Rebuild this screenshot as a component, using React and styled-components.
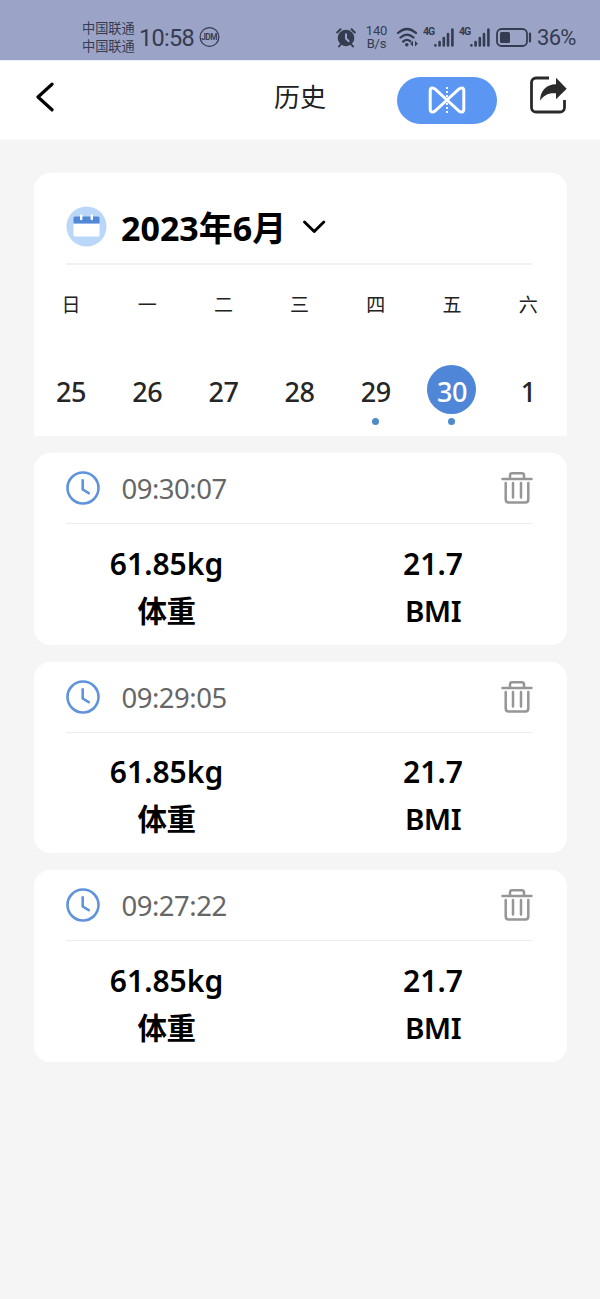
import React from "react";
import styled, { createGlobalStyle } from "styled-components";

const GlobalStyle = createGlobalStyle`
  * { box-sizing: border-box; }
  body {
    margin: 0;
    background: #f5f5f5;
    color: #000;
    font-family: "Noto Sans", "Noto Sans CJK SC", sans-serif;
  }
  svg { display: block; flex: none; }
`;

const Screen = styled.div`
  width: 600px;
  height: 1299px;
  overflow: hidden;
  background: #f5f5f5;
`;

const StatusBar = styled.header`
  display: flex;
  align-items: center;
  height: 60px;
  padding: 15px 24px 0 82px;
  background: #9ba4c6;
  color: #353b50;
  white-space: nowrap;
`;

const Carriers = styled.div`
  width: 53px;
  margin-top: -2px;
  font-size: 13.2px;
  line-height: 18px;
`;

const Clock = styled.div`
  width: 55px;
  margin: 0 5px 0 4px;
  font: 23.5px/30px Roboto, sans-serif;
  letter-spacing: -0.7px;
`;

const NetSpeed = styled.div`
  width: 23px;
  margin: -1px 8px 0 9px;
  font: 13px/13px Roboto, sans-serif;
  letter-spacing: -0.2px;
  text-align: center;
`;

const Spacer = styled.div`
  flex: 1;
`;

const Signals = styled.div`
  display: flex;
  gap: 5px;
  margin: 0 6px 0 3px;
`;

const Signal = styled.div`
  display: flex;
  align-items: center;
  width: 31px;
`;

const Generation = styled.span`
  align-self: flex-start;
  width: 11px;
  margin-top: -2px;
  font: 700 10.5px/12px Roboto, sans-serif;
  letter-spacing: -1px;
`;

const Percent = styled.div`
  width: 39px;
  margin-left: 5px;
  font: 22px/30px Roboto, sans-serif;
  letter-spacing: -0.7px;
`;

const NavBar = styled.nav`
  display: grid;
  grid-template-columns: 200px 200px 100px 1fr;
  align-items: center;
  height: 80px;
  background: #fff;
  border-top: 1px solid #eaf0fd;
  border-bottom: 1px solid #fafafa;
`;

const BackButton = styled.button`
  display: flex;
  padding: 0 0 6px 35px;
  border: 0;
  background: none;
`;

const Title = styled.h1`
  margin: 0;
  padding-bottom: 7px;
  color: #222;
  font-size: 26px;
  font-weight: 400;
  line-height: 36px;
  text-align: center;
`;

const CompareButton = styled.button`
  display: flex;
  align-items: center;
  justify-content: center;
  width: 100px;
  height: 47px;
  margin-left: -3px;
  padding: 0;
  border: 0;
  border-radius: 24px;
  background: #5a96f2;
`;

const ShareButton = styled.button`
  display: flex;
  padding: 0 0 10px 29px;
  border: 0;
  background: none;
`;

const Content = styled.main`
  display: flex;
  flex-direction: column;
  gap: 17px;
  padding: 33px 33.5px 0;
`;

const CalendarCard = styled.section`
  height: 263px;
  border-radius: 16px 16px 2px 2px;
  background: #fff;
`;

const MonthRow = styled.div`
  display: flex;
  align-items: center;
  height: 92px;
  margin: 0 35px 0 32.5px;
  padding-top: 16px;
  border-bottom: 2px solid #f1f1f1;
`;

const MonthLabel = styled.div`
  width: 166px;
  margin: 4px 15px 0 14px;
  font-size: 34px;
  font-weight: 700;
  line-height: 44px;
  white-space: nowrap;
`;

const WeekGrid = styled.div`
  display: grid;
  grid-template-columns: repeat(7, 76.2px);
  justify-content: center;
  margin-right: 0.8px;
`;

const Weekday = styled.div`
  height: 79px;
  color: #222;
  font-size: 19px;
  line-height: 80px;
  text-align: center;
`;

const Day = styled.div`
  display: flex;
  flex-direction: column;
  align-items: center;
  padding-top: 21px;
`;

const DayNumber = styled.div`
  width: 49px;
  height: 49px;
  border-radius: 50%;
  background: ${(p) => (p.$selected ? "#4f86d8" : "transparent")};
  color: ${(p) => (p.$selected ? "#fff" : "#262626")};
  font-size: 27px;
  font-weight: 500;
  line-height: 53px;
  letter-spacing: -0.4px;
  text-align: center;
`;

const Dot = styled.div`
  width: 7px;
  height: 7px;
  margin-top: 4px;
  border-radius: 50%;
  background: #4f8acb;
`;

const RecordCard = styled.article`
  height: 191.7px;
  border-radius: 16px;
  background: #fff;
`;

const RecordHeader = styled.div`
  display: flex;
  align-items: center;
  height: 71px;
  margin: 0 34px 0 32.5px;
  border-bottom: 1.5px solid #ededed;
`;

const RecordTime = styled.div`
  flex: 1;
  margin-left: 21.5px;
  padding-top: 2px;
  color: #666;
  font-size: 27.5px;
  line-height: 38px;
  letter-spacing: -0.5px;
`;

const Measures = styled.div`
  display: grid;
  grid-template-columns: 266px 267px;
  padding-top: 15.5px;
`;

const Measure = styled.div`
  text-align: center;
  font-size: 30px;
  font-weight: 600;
  line-height: 47px;
`;

const MeasureName = styled(Measure)`
  font-size: 29.5px;
  letter-spacing: -0.6px;
`;

const AlarmIcon = () => (
  <svg width="20" height="22" viewBox="0 0 20 22">
    <circle cx="10" cy="11" r="8.3" fill="#353b50" />
    <path d="M1.2 5.5 4.5 2.2M18.8 5.5l-3.3-3.3M5 17l-2 2.5M15 17l2 2.5" stroke="#353b50" strokeWidth="2" strokeLinecap="round" />
    <path d="M10 6.5v5l3.2 3.2" fill="none" stroke="#9ba4c6" strokeWidth="2" />
  </svg>
);

const WifiIcon = () => (
  <svg width="24" height="22" viewBox="0 0 24 22" fill="none" stroke="#353b50" strokeWidth="2.3" strokeLinecap="round">
    <path d="M2 6Q11-2 20 6M4.5 10.5Q11 4.8 17.5 10.5M7.2 14.5Q11 11.3 14.2 14.2" />
    <circle cx="10.8" cy="17.7" r="1.8" fill="#353b50" stroke="none" />
    <path d="m17 13.8-2.8 2.9 2.8 2.9zm2 0 2.8 2.9-2.8 2.9z" fill="#353b50" stroke="none" />
  </svg>
);

const BarsIcon = () => (
  <svg width="20" height="20" viewBox="0 0 20 20" stroke="#353b50" strokeWidth="2.6" strokeLinecap="round">
    <path d="M1.4 17.2v.2M5.6 14v3.4M9.8 10v7.4M14 6v11.4M18.4 1.6v15.8" />
  </svg>
);

const BatteryIcon = () => (
  <svg width="36" height="20" viewBox="0 0 36 20">
    <rect x="1" y="1" width="30" height="17" rx="4.5" fill="none" stroke="#353b50" strokeWidth="1.8" />
    <rect x="4" y="4" width="10" height="11" rx="1.5" fill="#353b50" />
    <path d="M34 5.5v8" stroke="#353b50" strokeWidth="2.2" strokeLinecap="round" />
  </svg>
);

const BadgeIcon = () => (
  <svg width="21" height="21" viewBox="0 0 21 21">
    <circle cx="10.5" cy="10" r="9.4" fill="none" stroke="#353b50" strokeWidth="1.2" />
    <text x="10.1" y="13.1" textAnchor="middle" fontFamily="Roboto, sans-serif" fontSize="8.4" fontWeight="600" letterSpacing="-.6" fill="#353b50">JDM</text>
  </svg>
);

const BackIcon = () => (
  <svg width="20" height="30" viewBox="0 0 20 30">
    <path d="M17 2.2 3 15l14 12.8" fill="none" stroke="#000" strokeWidth="3.2" strokeLinecap="round" strokeLinejoin="round" />
  </svg>
);

const CompareIcon = () => (
  <svg width="38" height="28" viewBox="0 0 38 28" fill="none" stroke="#fff">
    <path d="M19 14 7.2 3.2C4.8 1 2.2 1.6 2.2 5v18c0 3.4 2.6 4 5 1.8L19 14 30.8 3.2c2.4-2.2 5-1.6 5 1.8v18c0 3.4-2.6 4-5 1.8Z" strokeWidth="3" strokeLinejoin="round" />
    <path d="M19 1v26" strokeWidth="1.8" strokeDasharray="2 2" />
  </svg>
);

const ShareIcon = () => (
  <svg width="38" height="38" viewBox="0 0 38 38">
    <path d="M20 2H7a4.5 4.5 0 0 0-4.5 4.5v25A4.5 4.5 0 0 0 7 36h24a4.5 4.5 0 0 0 4.5-4.5V24" fill="none" stroke="#2b2b2b" strokeWidth="2.8" />
    <path d="M27 1.8 37.7 12.700 27 23.300v-6c-7.500-.8-12 1.700-16 7.500.5-10.500 6.300-16.300 16-16.500z" fill="#2b2b2b" />
  </svg>
);

const CalendarIcon = () => (
  <svg width="41" height="41" viewBox="0 0 41 41">
    <circle cx="20.5" cy="20.5" r="20" fill="#bad6f8" />
    <path d="M7.5 17.5h26V29q0 1.5-1.5 1.5H9q-1.5 0-1.5-1.5z" fill="#fff" />
    <path d="M7.5 17.5V12q0-1.5 1.5-1.5h23q1.5 0 1.5 1.5v5.5z" fill="#5288d7" />
    <path d="M15.2 9.5v3.5M25.8 9.5v3.5" stroke="#fff" strokeWidth="2.4" strokeLinecap="round" />
  </svg>
);

const ChevronIcon = () => (
  <svg width="24" height="16" viewBox="0 0 24 16">
    <path d="m2.5 4 9.7 9.5L21.8 4" fill="none" stroke="#000" strokeWidth="2.9" strokeLinecap="round" strokeLinejoin="round" />
  </svg>
);

const TimeIcon = () => (
  <svg width="34" height="34" viewBox="0 0 34 34" fill="none" stroke="#5f93dc">
    <circle cx="17" cy="17" r="15.5" strokeWidth="2.6" />
    <path d="M16.7 9.2v9.3l6 3.7" strokeWidth="2.6" strokeLinecap="round" strokeLinejoin="round" />
  </svg>
);

const TrashIcon = () => (
  <svg width="32" height="34" viewBox="0 0 32 34" fill="none" stroke="#969696" strokeWidth="2.5" strokeLinecap="round" strokeLinejoin="round">
    <path d="M1.5 8h29M9 7.5V4.5q0-2.2 2.2-2.2h9.6q2.2 0 2.2 2.2v3" />
    <path d="M4.7 12v16.500q0 3 3 3h16.600q3 0 3-3V12M12 12v14.500M20 12v14.500" />
  </svg>
);

const weekdays = ["日", "一", "二", "三", "四", "五", "六"];
const days = [
  { n: 25 },
  { n: 26 },
  { n: 27 },
  { n: 28 },
  { n: 29, marked: true },
  { n: 30, marked: true, selected: true },
  { n: 1 },
];
const records = ["09:30:07", "09:29:05", "09:27:22"];

export default function App() {
  return (
    <Screen>
      <GlobalStyle />
      <StatusBar>
        <Carriers>
          <div>中国联通</div>
          <div>中国联通</div>
        </Carriers>
        <Clock>10:58</Clock>
        <BadgeIcon />
        <Spacer />
        <AlarmIcon />
        <NetSpeed>
          <div>140</div>
          <div>B/s</div>
        </NetSpeed>
        <WifiIcon />
        <Signals>
          <Signal>
            <Generation>4G</Generation>
            <BarsIcon />
          </Signal>
          <Signal>
            <Generation>4G</Generation>
            <BarsIcon />
          </Signal>
        </Signals>
        <BatteryIcon />
        <Percent>36%</Percent>
      </StatusBar>
      <NavBar>
        <BackButton aria-label="返回"><BackIcon /></BackButton>
        <Title>历史</Title>
        <CompareButton aria-label="对比"><CompareIcon /></CompareButton>
        <ShareButton aria-label="分享"><ShareIcon /></ShareButton>
      </NavBar>
      <Content>
        <CalendarCard>
          <MonthRow>
            <CalendarIcon />
            <MonthLabel>2023年6月</MonthLabel>
            <ChevronIcon />
          </MonthRow>
          <WeekGrid>
            {weekdays.map((d) => <Weekday key={d}>{d}</Weekday>)}
            {days.map((d) => (
              <Day key={d.n}>
                <DayNumber $selected={d.selected}>{d.n}</DayNumber>
                {d.marked && <Dot />}
              </Day>
            ))}
          </WeekGrid>
        </CalendarCard>
        {records.map((time) => (
          <RecordCard key={time}>
            <RecordHeader>
              <TimeIcon />
              <RecordTime>{time}</RecordTime>
              <TrashIcon />
            </RecordHeader>
            <Measures>
              <Measure>61.85kg</Measure>
              <Measure>21.7</Measure>
              <MeasureName>体重</MeasureName>
              <MeasureName>BMI</MeasureName>
            </Measures>
          </RecordCard>
        ))}
      </Content>
    </Screen>
  );
}
